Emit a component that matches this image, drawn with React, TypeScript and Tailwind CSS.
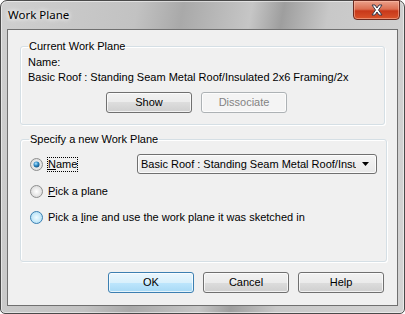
import React from "react";

const font = { fontFamily: '"Liberation Sans", Arial, sans-serif' };
const titleFont = { fontFamily: '"Noto Sans", "DejaVu Sans", sans-serif' };

function Radio({ checked, hover }: { checked?: boolean; hover?: boolean }) {
  const id = checked ? "rgc" : hover ? "rgh" : "rgn";
  return (
    <svg width="13" height="13" viewBox="0 0 13 13" className="shrink-0">
      <defs>
        <radialGradient id={id} cx="0.5" cy="0.5" r="0.6">
          <stop offset="0" stopColor={hover ? "#f0fbff" : "#ffffff"} />
          <stop offset="1" stopColor={hover ? "#a9dcf5" : "#d4d4d4"} />
        </radialGradient>
        <radialGradient id="dot" cx="0.4" cy="0.35" r="0.7">
          <stop offset="0" stopColor="#b5e6ff" />
          <stop offset="0.5" stopColor="#2f8bc6" />
          <stop offset="1" stopColor="#0d4a7a" />
        </radialGradient>
      </defs>
      <circle cx="6.5" cy="6.5" r="6" fill={`url(#${id})`} stroke={hover ? "#3c7fb1" : "#8e8f8f"} strokeWidth="1" />
      {checked && <circle cx="6.5" cy="6.5" r="3" fill="url(#dot)" />}
    </svg>
  );
}

function Button({ children, kind = "normal" }: { children: React.ReactNode; kind?: "normal" | "disabled" | "default" }) {
  const cls =
    kind === "disabled"
      ? "border-[#adb2b5] bg-[#f4f4f4] text-[#838383]"
      : kind === "default"
      ? "border-[#3c7fb1] bg-[linear-gradient(#eaf6fd_0%,#d9f0fc_50%,#bee6fd_50%,#a7d9f5_100%)] text-black"
      : "border-[#707070] bg-[linear-gradient(#f2f2f2_0%,#ebebeb_50%,#dddddd_50%,#cfcfcf_100%)] text-black";
  return (
    <div className={`flex h-[21px] w-[86px] items-center justify-center rounded-[3px] border text-[11px] shadow-[inset_0_0_0_1px_rgba(255,255,255,0.7)] ${cls}`}>
      {children}
    </div>
  );
}

export default function App() {
  return (
    <div className="h-[314px] w-[405px] overflow-hidden" style={font}>
      <div className="flex h-[314px] w-[405px] flex-col rounded-t-[7px] rounded-b-[5px] border border-[#4a4a4a] bg-[linear-gradient(100deg,#cfcfcf_0%,#c2c2c2_30%,#a9a9a9_40%,#c6c6c6_55%,#9e9e9e_62%,#c8c8c8_72%,#d4d4d4_100%)] shadow-[inset_0_0_0_1px_rgba(255,255,255,0.5)]">
        <div className="relative flex h-[28px] shrink-0 items-center pl-[7px]">
          <span className="text-[11.5px] text-black [text-shadow:0_0_6px_#fff,0_0_4px_#fff]" style={titleFont}>
            Work Plane
          </span>
          <div className="absolute right-[4px] top-[-1px] flex h-[20px] w-[47px] items-center justify-center rounded-b-[4px] border border-[#6b2a20] bg-[linear-gradient(#eba08a_0%,#dc6f52_45%,#c8381a_55%,#d9532a_100%)] shadow-[inset_0_0_0_1px_rgba(255,200,180,0.5)]">
            <svg width="14" height="12" viewBox="0 0 14 12">
              <path d="M2 1 L5 1 L7 4 L9 1 L12 1 L8.5 6 L12 11 L9 11 L7 8 L5 11 L2 11 L5.5 6 Z" fill="#ffffff" stroke="#3a3a4a" strokeWidth="1" strokeLinejoin="round" />
            </svg>
          </div>
        </div>
        <div className="mx-[6px] mb-[7px] flex flex-1 flex-col border border-[#707070] bg-[#f0f0f0] px-[12px] pt-[9px]">
          <fieldset className="h-[86px] rounded-[3px] border border-[#d5dfe5] px-[7px] shadow-[inset_1px_1px_0_#fff,1px_1px_0_#fff]">
            <legend className="px-[1px] text-[11px] leading-[14px] text-black">Current Work Plane</legend>
            <div className="mt-[2px] text-[11px] leading-[15px] text-black">Name:</div>
            <div className="whitespace-nowrap text-[11px] leading-[15px] text-black">Basic Roof : Standing Seam Metal Roof/Insulated 2x6 Framing/2x</div>
            <div className="mt-[7px] flex gap-[9px] pl-[78px]">
              <Button>Show</Button>
              <Button kind="disabled">Dissociate</Button>
            </div>
          </fieldset>
          <fieldset className="mt-[7px] h-[130px] rounded-[3px] border border-[#d5dfe5] px-[9px] shadow-[inset_1px_1px_0_#fff,1px_1px_0_#fff]">
            <legend className="ml-[-1px] px-[1px] text-[11px] leading-[14px] text-black">Specify a new Work Plane</legend>
            <div className="mt-[8px] flex items-center">
              <div className="flex w-[107px] items-center">
                <Radio checked />
                <span className="ml-[4px] border border-dotted border-black text-[11px] leading-[13px] text-black">
                  <span className="underline underline-offset-[1px]">N</span>ame
                </span>
              </div>
              <div className="flex h-[20px] w-[240px] items-center rounded-[3px] border border-[#707070] bg-[linear-gradient(#f4f4f4,#e8e8e8)] pl-[3px] pr-[7px] text-[11px] text-black shadow-[inset_0_0_0_1px_rgba(255,255,255,0.8)]">
                <span className="flex-1 overflow-hidden whitespace-nowrap">Basic Roof : Standing Seam Metal Roof/Insulated 2x6 Framing/2x</span>
                <svg width="7" height="4" viewBox="0 0 7 4" className="ml-[6px] shrink-0">
                  <path d="M0 0 H7 L3.5 4 Z" fill="#000" />
                </svg>
              </div>
            </div>
            <div className="mt-[10px] flex items-center">
              <Radio />
              <span className="ml-[5px] text-[11px] leading-[15px] text-black">
                <span className="underline underline-offset-[1px]">P</span>ick a plane
              </span>
            </div>
            <div className="mt-[11px] flex items-center">
              <Radio hover />
              <span className="ml-[5px] text-[11px] leading-[15px] text-black">
                Pick a <span className="underline underline-offset-[1px]">l</span>ine and use the work plane it was sketched in
              </span>
            </div>
          </fieldset>
          <div className="mt-[10px] flex justify-end gap-[9px] pr-[1px]">
            <Button kind="default">OK</Button>
            <Button>Cancel</Button>
            <Button>Help</Button>
          </div>
        </div>
      </div>
    </div>
  );
}
